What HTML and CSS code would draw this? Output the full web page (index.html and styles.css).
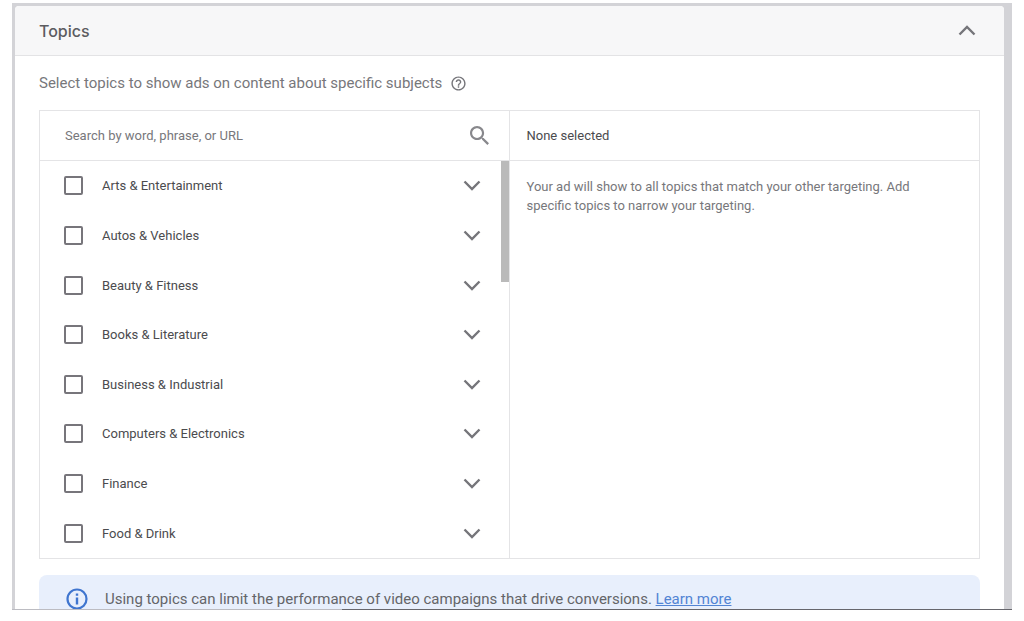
FILE: index.html
```html
<!DOCTYPE html>
<html lang="en">
<head>
<meta charset="utf-8">
<meta name="viewport" content="width=device-width, initial-scale=1">
<title>Topics</title>
<link rel="stylesheet" href="styles.css">
</head>
<body>
<svg class="defs" aria-hidden="true">
  <symbol id="chevron" viewBox="0 0 18 11"><path d="M1.5 1.5 9 9l7.500-7.500" fill="none" stroke="currentColor" stroke-width="2.400"/></symbol>
</svg>
<main class="frame">
  <section class="card">
    <header class="card-header">
      <h1 class="title">Topics</h1>
      <button class="icon-button" type="button" aria-label="Collapse"><svg class="chevron up"><use href="#chevron"/></svg></button>
    </header>
    <div class="card-body">
      <div class="intro">
        <p class="intro-text">Select topics to show ads on content about specific subjects</p>
        <button class="icon-button" type="button" aria-label="Help">
          <svg class="help" viewBox="0 0 24 24"><path fill="currentColor" d="M11 18h2v-2h-2v2zm1-16C6.480 2 2 6.480 2 12s4.480 10 10 10 10-4.480 10-10S17.520 2 12 2zm0 18c-4.410 0-8-3.590-8-8s3.590-8 8-8 8 3.590 8 8-3.590 8-8 8zm0-14c-2.210 0-4 1.790-4 4h2c0-1.100.9-2 2-2s2 .9 2 2c0 2-3 1.750-3 5h2c0-2.250 3-2.500 3-5 0-2.210-1.790-4-4-4z"/></svg>
        </button>
      </div>
      <div class="picker">
        <div class="pane available">
          <div class="pane-head search">
            <input class="search-input" type="text" aria-label="Search topics" placeholder="Search by word, phrase, or URL">
            <button class="icon-button" type="button" aria-label="Search">
              <svg class="search-icon" viewBox="3 3 17.500 17.500"><path fill="currentColor" d="M15.500 14h-.79l-.28-.27C15.410 12.590 16 11.110 16 9.500 16 5.910 13.090 3 9.500 3S3 5.910 3 9.500 5.910 16 9.500 16c1.610 0 3.090-.59 4.230-1.570l.27.28v.79l5 4.990L20.490 19l-4.990-5zm-6 0C7.010 14 5 11.990 5 9.500S7.010 5 9.500 5 14 7.010 14 9.500 11.990 14 9.500 14z"/></svg>
            </button>
          </div>
          <div class="list-area">
            <ul class="topics">
              <li class="topic"><label class="topic-label"><input class="check" type="checkbox">Arts &amp; Entertainment</label><button class="icon-button" type="button" aria-label="Expand Arts &amp; Entertainment"><svg class="chevron"><use href="#chevron"/></svg></button></li>
              <li class="topic"><label class="topic-label"><input class="check" type="checkbox">Autos &amp; Vehicles</label><button class="icon-button" type="button" aria-label="Expand Autos &amp; Vehicles"><svg class="chevron"><use href="#chevron"/></svg></button></li>
              <li class="topic"><label class="topic-label"><input class="check" type="checkbox">Beauty &amp; Fitness</label><button class="icon-button" type="button" aria-label="Expand Beauty &amp; Fitness"><svg class="chevron"><use href="#chevron"/></svg></button></li>
              <li class="topic"><label class="topic-label"><input class="check" type="checkbox">Books &amp; Literature</label><button class="icon-button" type="button" aria-label="Expand Books &amp; Literature"><svg class="chevron"><use href="#chevron"/></svg></button></li>
              <li class="topic"><label class="topic-label"><input class="check" type="checkbox">Business &amp; Industrial</label><button class="icon-button" type="button" aria-label="Expand Business &amp; Industrial"><svg class="chevron"><use href="#chevron"/></svg></button></li>
              <li class="topic"><label class="topic-label"><input class="check" type="checkbox">Computers &amp; Electronics</label><button class="icon-button" type="button" aria-label="Expand Computers &amp; Electronics"><svg class="chevron"><use href="#chevron"/></svg></button></li>
              <li class="topic"><label class="topic-label"><input class="check" type="checkbox">Finance</label><button class="icon-button" type="button" aria-label="Expand Finance"><svg class="chevron"><use href="#chevron"/></svg></button></li>
              <li class="topic"><label class="topic-label"><input class="check" type="checkbox">Food &amp; Drink</label><button class="icon-button" type="button" aria-label="Expand Food &amp; Drink"><svg class="chevron"><use href="#chevron"/></svg></button></li>
            </ul>
            <div class="scroll-thumb"></div>
          </div>
        </div>
        <div class="pane">
          <div class="pane-head selected-head">None selected</div>
          <p class="hint">Your ad will show to all topics that match your other targeting. Add specific topics to narrow your targeting.</p>
        </div>
      </div>
      <div class="notice">
        <svg class="info" viewBox="0 0 22 22" aria-hidden="true"><circle cx="11" cy="11" r="9.500" fill="none" stroke="currentColor" stroke-width="2.200"/><path fill="currentColor" d="M9.800 5.500h2.400v2.300H9.800zM9.800 9.500h2.400v7H9.800z"/></svg>
        <p class="notice-text">Using topics can limit the performance of video campaigns that drive conversions. <a class="link" href="#">Learn more</a></p>
      </div>
    </div>
  </section>
  <div class="edge"></div>
</main>
</body>
</html>
```
FILE: styles.css
```css
* { box-sizing: border-box; }

body {
  margin: 0;
  background: #fff;
  color: #4b4b4e;
  font: 13px/19px Roboto, "Liberation Sans", sans-serif;
}

h1, p, ul { margin: 0; padding: 0; }

.defs { display: none; }

.frame {
  margin: 3px 12px 10px;
  padding: 3px 8px 0 3px;
  background: #d3d3d7;
  position: relative;
}

.card {
  background: #fff;
  border-radius: 4px 4px 0 0;
  overflow: hidden;
}

.card-header {
  display: flex;
  align-items: center;
  justify-content: space-between;
  height: 50px;
  padding: 0 28px 0 24px;
  background: #f7f7f8;
  border-bottom: 1px solid #e3e3e5;
}

.title {
  color: #5c5c60;
  font: 500 16px/20px Inter, Roboto, sans-serif;
}

.icon-button {
  display: flex;
  padding: 0;
  border: 0;
  background: none;
  color: #75757a;
  cursor: pointer;
}

.chevron { width: 18px; height: 11px; }
.up { transform: rotate(180deg); }

.card-body { padding: 16px 24px 0; }

.intro {
  display: flex;
  align-items: center;
  gap: 8px;
  height: 22px;
  margin-bottom: 16px;
}

.intro-text {
  color: #77777b;
  font-size: 15px;
}

.help { width: 17px; height: 17px; }

.picker {
  display: grid;
  grid-template-columns: 1fr 1fr;
  border: 1px solid #e4e4e6;
}

.available { border-right: 1px solid #e4e4e6; }

.pane-head {
  display: flex;
  align-items: center;
  height: 50px;
  border-bottom: 1px solid #e4e4e6;
}

.search { padding: 0 20px 0 25px; }

.search-input {
  flex: 1;
  min-width: 0;
  padding: 0;
  border: 0;
  outline: 0;
  background: none;
  color: #4b4b4e;
  font: inherit;
}

.search-input::placeholder { color: #77777b; opacity: 1; }

.search-icon { width: 19px; height: 19px; color: #88888c; }

.list-area { position: relative; }

.topics {
  display: grid;
  grid-auto-rows: 1fr;
  min-height: 397px;
  list-style: none;
}

.topic {
  display: flex;
  align-items: center;
  justify-content: space-between;
  padding: 0 28px 0 24px;
}

.topic-label {
  display: flex;
  align-items: center;
  gap: 19px;
}

.check {
  appearance: none;
  width: 19px;
  height: 19px;
  margin: 0;
  border: 2px solid #77757b;
  border-radius: 2px;
}

.check:checked { background: #3f75cf; }

.scroll-thumb {
  position: absolute;
  top: 0;
  right: 0;
  width: 8px;
  height: 121px;
  background: #bababa;
}

.selected-head { padding: 0 17px; }

.hint {
  padding: 16px 48px 16px 17px;
  color: #77777b;
}

.notice {
  display: flex;
  align-items: center;
  gap: 17px;
  margin-top: 16px;
  padding: 13px 27px 0;
  background: #e8effc;
  border-radius: 8px 8px 0 0;
  color: #646569;
  font-size: 15px;
}

.info { flex: none; width: 22px; height: 22px; color: #3f75cf; }

.link { color: #5284d4; text-decoration: underline; }

.edge {
  position: absolute;
  inset: auto 0 0;
  height: 1px;
  background: linear-gradient(to right, #bcbcc2 33%, #66666c 33%);
}
```
